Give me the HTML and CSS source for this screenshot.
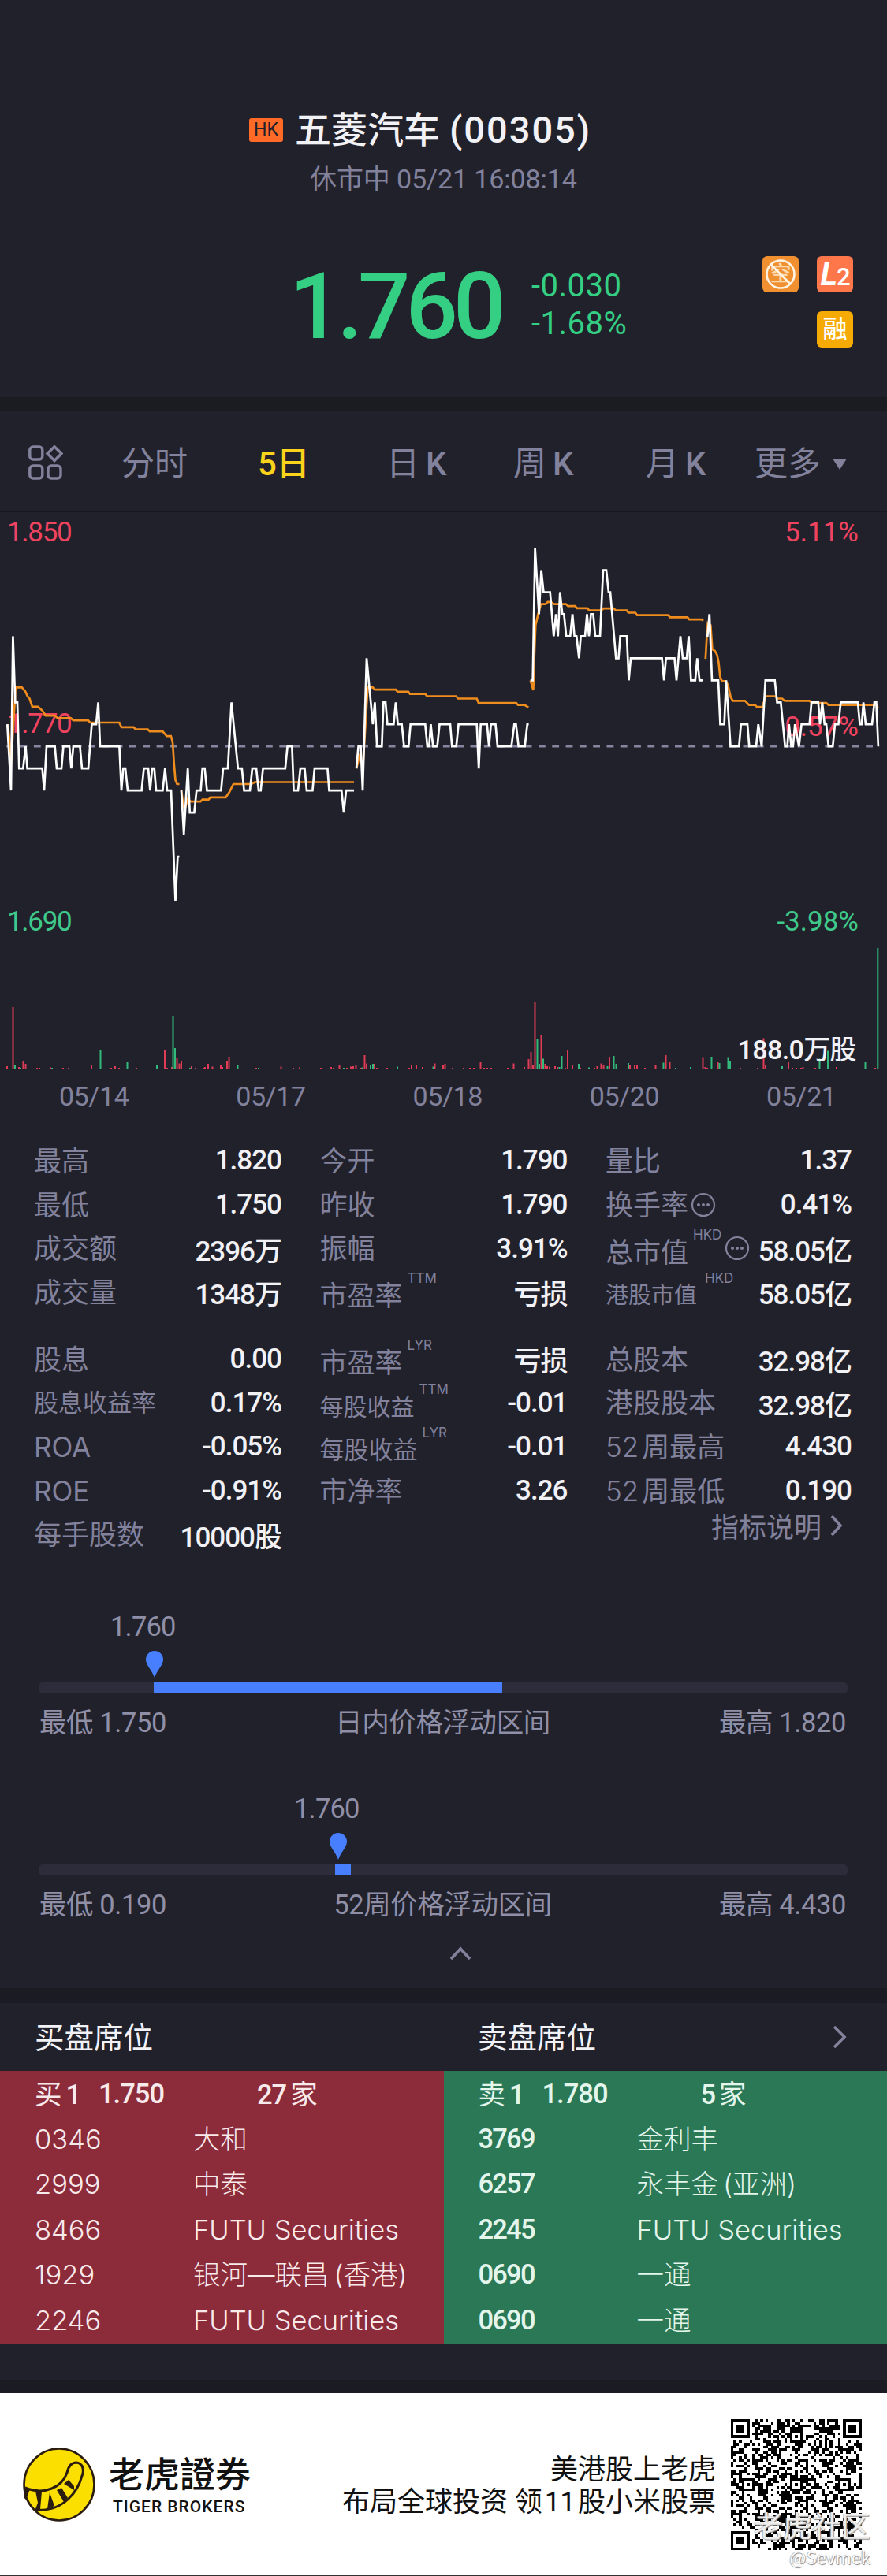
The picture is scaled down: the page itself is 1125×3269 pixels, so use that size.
FILE: index.html
```
<!DOCTYPE html>
<html lang="zh-CN">
<head>
    <meta charset="UTF-8">
    <meta name="viewport" content="width=device-width, initial-scale=1.0">
    <title>五菱汽车 (00305)</title>
    <link rel="stylesheet" href="styles.css">
</head>
<body>
    <header class="quote">
        <h1 class="quote-name"><span class="market">HK</span>五菱汽车<span class="code">(00305)</span></h1>
        <p class="quote-time">休市中 05/21 16:08:14</p>
        <div class="quote-row">
            <div class="price">1.760</div>
            <div class="change">
                <div>-0.030</div>
                <div>-1.68%</div>
            </div>
            <div class="badges">
                <span class="badge no-short">空
                    <svg viewBox="0 0 46 46"><circle cx="23" cy="23" r="17.5"/><path d="M11 11L35 35"/></svg>
                </span>
                <span class="badge level2"><i>L</i>2</span>
                <span class="badge margin-ok">融</span>
            </div>
        </div>
    </header>

    <nav class="tabs">
        <svg class="tabs-icon" viewBox="0 0 44 44">
            <rect x="1.8" y="2" width="16" height="16" rx="4"/>
            <path d="M33 1.8L42 10.5L33 19.5L24 10.5Z"/>
            <rect x="1.8" y="26" width="16" height="16" rx="4"/>
            <rect x="25" y="26" width="16" height="16" rx="4"/>
        </svg>
        <span>分时</span>
        <span class="active">5日</span>
        <span>日<b>K</b></span>
        <span>周<b>K</b></span>
        <span>月<b>K</b></span>
        <span class="more">更多<i class="caret"></i></span>
    </nav>

    <section class="chart">
        <svg class="chart-svg" viewBox="0 650 1125 708">
            <g class="axis">
                <text class="up" x="9" y="687">1.850</text>
                <text class="up" x="9" y="930">1.770</text>
                <text class="down" x="9" y="1181">1.690</text>
                <text class="up end" x="1089" y="687">5.11%</text>
                <text class="up end" x="1089" y="934">0.57%</text>
                <text class="down end" x="1089" y="1181">-3.98%</text>
            </g>
            <path class="base-line" d="M8.3 947.2H1114"/>
            <g id="average"></g>
            <g id="price"></g>
            <g id="volume"></g>
            <text class="volume-label end" x="1086" y="1344">188.0万股</text>
        </svg>
        <div class="dates">
            <span>05/14</span><span>05/17</span><span>05/18</span><span>05/20</span><span>05/21</span>
        </div>
    </section>

    <section class="stats">
        <div class="stats-grid">
            <dl>
                <div><dt>最高</dt><dd>1.820</dd></div>
                <div><dt>最低</dt><dd>1.750</dd></div>
                <div><dt>成交额</dt><dd>2396万</dd></div>
                <div><dt>成交量</dt><dd>1348万</dd></div>
            </dl>
            <dl>
                <div><dt>今开</dt><dd>1.790</dd></div>
                <div><dt>昨收</dt><dd>1.790</dd></div>
                <div><dt>振幅</dt><dd>3.91%</dd></div>
                <div><dt class="has-sup">市盈率<sup>TTM</sup></dt><dd>亏损</dd></div>
            </dl>
            <dl>
                <div><dt>量比</dt><dd>1.37</dd></div>
                <div>
                    <dt>换手率</dt>
                    <svg class="dots" viewBox="0 0 32 32"><circle class="ring" cx="16" cy="16" r="14"/><circle cx="10" cy="16" r="2"/><circle cx="16" cy="16" r="2"/><circle cx="22" cy="16" r="2"/></svg>
                    <dd>0.41%</dd>
                </div>
                <div>
                    <dt class="has-sup">总市值<sup>HKD</sup></dt>
                    <svg class="dots" viewBox="0 0 32 32"><circle class="ring" cx="16" cy="16" r="14"/><circle cx="10" cy="16" r="2"/><circle cx="16" cy="16" r="2"/><circle cx="22" cy="16" r="2"/></svg>
                    <dd>58.05亿</dd>
                </div>
                <div><dt class="has-sup small far">港股市值<sup>HKD</sup></dt><dd>58.05亿</dd></div>
            </dl>
        </div>
        <div class="stats-grid">
            <dl>
                <div><dt>股息</dt><dd>0.00</dd></div>
                <div><dt class="fit">股息收益率</dt><dd>0.17%</dd></div>
                <div><dt>ROA</dt><dd>-0.05%</dd></div>
                <div><dt>ROE</dt><dd>-0.91%</dd></div>
                <div><dt>每手股数</dt><dd>10000股</dd></div>
            </dl>
            <dl>
                <div><dt class="has-sup">市盈率<sup>LYR</sup></dt><dd>亏损</dd></div>
                <div><dt class="has-sup medium">每股收益<sup>TTM</sup></dt><dd>-0.01</dd></div>
                <div><dt class="has-sup fit">每股收益<sup>LYR</sup></dt><dd>-0.01</dd></div>
                <div><dt>市净率</dt><dd>3.26</dd></div>
            </dl>
            <dl>
                <div><dt>总股本</dt><dd>32.98亿</dd></div>
                <div><dt>港股股本</dt><dd>32.98亿</dd></div>
                <div><dt><span class="num">52</span>周最高</dt><dd>4.430</dd></div>
                <div><dt><span class="num">52</span>周最低</dt><dd>0.190</dd></div>
                <div class="explain">指标说明
                    <svg viewBox="0 0 20 30"><path d="M4 3L15 15L4 27"/></svg>
                </div>
            </dl>
        </div>
    </section>

    <section class="ranges">
        <div class="range">
            <div class="range-value day">1.760</div>
            <svg class="pin day" viewBox="0 0 22 34"><path d="M11 34C8 25 0 18 0 11A11 11 0 0 1 22 11C22 18 14 25 11 34Z"/></svg>
            <div class="track"><div class="fill" style="margin-left: 146px; width: 442px"></div></div>
            <div class="range-text"><span>最低 1.750</span><span>日内价格浮动区间</span><span>最高 1.820</span></div>
        </div>
        <div class="range">
            <div class="range-value year">1.760</div>
            <svg class="pin year" viewBox="0 0 22 34"><path d="M11 34C8 25 0 18 0 11A11 11 0 0 1 22 11C22 18 14 25 11 34Z"/></svg>
            <div class="track"><div class="fill" style="margin-left: 376px; width: 20px"></div></div>
            <div class="range-text"><span>最低 0.190</span><span>52周价格浮动区间</span><span>最高 4.430</span></div>
        </div>
        <svg class="collapse" viewBox="0 0 28 18"><path d="M2 16L14 3L26 16"/></svg>
    </section>

    <section class="seats">
        <div class="seats-head">
            <h2>买盘席位</h2>
            <h2>卖盘席位</h2>
            <svg viewBox="0 0 20 32"><path d="M3 3L16 16L3 29"/></svg>
        </div>
        <div class="seats-body">
            <div class="side buy">
                <div class="level"><span class="tag">买<b>1</b></span><b class="at">1.750</b><span class="count"><b>27</b>家</span></div>
                <div class="seat"><span>0346</span><span>大和</span></div>
                <div class="seat"><span>2999</span><span>中泰</span></div>
                <div class="seat"><span>8466</span><span>FUTU Securities</span></div>
                <div class="seat"><span>1929</span><span>银河—联昌<em>(香港)</em></span></div>
                <div class="seat"><span>2246</span><span>FUTU Securities</span></div>
            </div>
            <div class="side sell">
                <div class="level"><span class="tag">卖<b>1</b></span><b class="at">1.780</b><span class="count"><b>5</b>家</span></div>
                <div class="seat"><span>3769</span><span>金利丰</span></div>
                <div class="seat"><span>6257</span><span>永丰金<em>(亚洲)</em></span></div>
                <div class="seat"><span>2245</span><span>FUTU Securities</span></div>
                <div class="seat"><span>0690</span><span>一通</span></div>
                <div class="seat"><span>0690</span><span>一通</span></div>
            </div>
        </div>
    </section>

    <footer class="promo">
        <svg class="logo" viewBox="0 0 92 94">
            <ellipse class="coin" cx="46" cy="47" rx="44.5" ry="45.5"/>
            <path class="tail" d="M3 51C28 61 50 50 56 32C58 22 63 19 68 19C76 20 78 28 75 36C70 55 52 82 16 79"/>
            <path class="stripe" d="M2 50L9 53L4 66L9 72L2 64ZM16 55L24 56L22 78L16 78L19 70ZM34 57L40 74L31 78ZM43 54L49 51L57 64L52 69ZM52 46L58 41L65 49L65 54Z"/>
        </svg>
        <div class="brand">
            <strong>老虎證券</strong>
            <span>TIGER BROKERS</span>
        </div>
        <div class="slogan">
            <p>美港股上老虎</p>
            <p>布局全球投资 领<b>11</b>股小米股票</p>
        </div>
        <div class="qr-box">
            <svg class="qr" id="qr" viewBox="0 0 49 49" shape-rendering="crispEdges"></svg>
            <span class="community">老虎社区</span>
            <span class="author">@Sevmek</span>
        </div>
    </footer>
    <script src="script.js"></script>
</body>
</html>
```
FILE: styles.css
```
* {
    box-sizing: border-box;
}
body {
    margin: 0;
    width: 1125px;
    background: #21212b;
    color: #f2f2f6;
    font-family: Roboto, "Noto Sans CJK SC", sans-serif;
    font-size: 35px;
}
h1, h2, p, dl, dd {
    margin: 0;
    font-weight: 400;
}
svg {
    display: block;
    flex: none;
}

/* quote header */
.quote {
    height: 504px;
    padding-top: 136px;
}
.quote-name {
    display: flex;
    align-items: center;
    height: 58px;
    padding-left: 316px;
    font-size: 46px;
    font-weight: 500;
    line-height: 58px;
}
.market {
    width: 43px;
    height: 30px;
    margin-right: 15px;
    border-radius: 3px;
    background: #ff6b26;
    color: #21212b;
    font-size: 23px;
    font-weight: 400;
    line-height: 30px;
    text-align: center;
}
.code {
    margin-left: 12px;
    font-size: 47px;
    letter-spacing: 2px;
}
.quote-time {
    height: 40px;
    margin-top: 12px;
    padding-left: 393px;
    color: #82829d;
    font-size: 34px;
    letter-spacing: -0.1px;
    line-height: 42px;
}
.quote-row {
    display: flex;
    height: 116px;
    margin-top: 79px;
}
.price {
    width: 307px;
    margin-left: 367px;
    color: #34cf83;
    font-size: 117px;
    font-weight: 500;
    letter-spacing: -6px;
    line-height: 128px;
}
.change {
    width: 150px;
    margin-top: 14px;
    color: #34cf83;
    font-size: 40px;
    line-height: 48px;
    letter-spacing: 0.5px;
}
.badges {
    display: grid;
    grid-template-columns: 46px 46px;
    gap: 23px;
    margin: 0 43px 0 auto;
}
.badge {
    position: relative;
    width: 46px;
    height: 46px;
    border-radius: 6px;
    color: #fff;
    font-size: 31px;
    font-weight: 500;
    line-height: 46px;
    text-align: center;
}
.no-short {
    background: #f09030;
    color: #fcd9ac;
    font-size: 27px;
}
.no-short svg {
    position: absolute;
    inset: 0;
    fill: none;
    stroke: #fff4e4;
    stroke-width: 2.6;
}
.level2 {
    background: #fe774a;
    letter-spacing: -1px;
    line-height: 54px;
}
.level2 i {
    font-size: 41px;
    font-weight: 700;
    line-height: 40px;
}
.margin-ok {
    grid-column: 2;
    background: #f5aa04;
}

/* period tabs */
.tabs {
    display: grid;
    grid-template-columns: 118px 173px 163px 161px 168px 138px auto;
    align-items: center;
    height: 146px;
    padding: 2px 0 0 36px;
    border-top: 18px solid #1b1b22;
    border-bottom: 1px solid #17171e;
    color: #82829d;
    font-size: 42px;
    line-height: 60px;
}
.tabs span {
    padding-top: 4px;
}
.tabs b {
    margin-left: 8px;
    font-weight: 500;
}
.tabs .active {
    color: #fbd31b;
    font-weight: 500;
}
.tabs-icon {
    width: 44px;
    height: 44px;
    fill: none;
    stroke: #82829d;
    stroke-width: 3.4;
}
.more {
    display: flex;
    align-items: center;
}
.caret {
    margin-left: 15px;
    border: 9px solid transparent;
    border-top: 14px solid #82829d;
    border-bottom: 0;
}

/* five day chart */
.chart {
    height: 770px;
}
.chart-svg {
    width: 1125px;
    height: 708px;
}
.axis text {
    font-size: 35px;
    letter-spacing: -1.3px;
}
.axis .end {
    letter-spacing: 0;
}
.end {
    text-anchor: end;
}
.axis .up {
    fill: #ef4360;
}
.axis .down {
    fill: #3fc98a;
}
.base-line {
    stroke: #85859f;
    stroke-width: 2.6;
    stroke-dasharray: 8.8 8.5;
}
#price path {
    fill: none;
    stroke: #fff;
    stroke-width: 2.7;
}
#average path {
    fill: none;
    stroke: #ee8c1e;
    stroke-width: 2.7;
}
.volume-label {
    fill: #f2f2f6;
    font-size: 34px;
    font-weight: 500;
    letter-spacing: -0.6px;
}
.dates {
    display: grid;
    grid-template-columns: repeat(5, 224.3px);
    padding-left: 7px;
    color: #82829d;
    font-size: 34px;
    line-height: 66px;
    letter-spacing: -0.4px;
    text-align: center;
}

/* key figures */
.stats {
    height: 618px;
    padding: 25px 45px 0 43px;
}
.stats-grid {
    display: grid;
    grid-template-columns: 314px 314px 312px;
    column-gap: 48.5px;
    margin-bottom: 29px;
}
.stats dl > div {
    display: flex;
    align-items: center;
    height: 55.7px;
    white-space: nowrap;
}
.stats dt {
    color: #82829d;
    font-family: Inter, "Noto Sans CJK SC", sans-serif;
    line-height: 52px;
}
.stats dd {
    margin-left: auto;
    font-weight: 500;
    letter-spacing: -1px;
}
.has-sup {
    display: flex;
    padding-top: 9px;
}
.has-sup sup {
    margin: -13px 0 0 6px;
    font-size: 17px;
    line-height: 34px;
}
.stats .small {
    font-size: 29px;
}
.stats .medium {
    font-size: 30px;
}
.stats .fit {
    font-size: 31px;
}
.stats .far sup {
    margin-left: 10px;
}
.num {
    margin-right: 4px;
    font-weight: 300;
}
.dots {
    width: 32px;
    height: 32px;
    margin-left: 3px;
    fill: #82829d;
}
.has-sup + .dots {
    margin-left: 4px;
}
.dots .ring {
    fill: none;
    stroke: #82829d;
    stroke-width: 2.2;
}
.stats .explain {
    height: 32px;
    justify-content: flex-end;
    padding-right: 9px;
    color: #82829d;
}
.explain svg {
    width: 20px;
    height: 30px;
    margin-left: 9px;
}
.explain path, .collapse path, .seats-head path {
    fill: none;
    stroke: #82829d;
    stroke-width: 3.6;
}

/* price ranges */
.ranges {
    height: 485px;
    padding: 4px 50px 0 49px;
    color: #8f8fa8;
    font-size: 34.5px;
}
.range {
    height: 230.7px;
}
.range-value {
    height: 44px;
    line-height: 44px;
    letter-spacing: -0.8px;
}
.range-value.day {
    padding-left: 91px;
}
.range-value.year {
    padding-left: 324px;
}
.pin {
    width: 22px;
    height: 34px;
    margin-top: 9px;
    fill: #477fff;
}
.pin.day {
    margin-left: 136px;
}
.pin.year {
    margin-left: 369px;
}
.track {
    height: 14px;
    margin-top: 6px;
    border-radius: 5px;
    background: #2c2c3a;
}
.fill {
    height: 14px;
    background: #477fff;
}
.range-text {
    display: grid;
    grid-template-columns: 1fr auto 1fr;
    padding: 12px 2px 0 1px;
    line-height: 50px;
    letter-spacing: -0.4px;
}
.range-text span:last-child {
    text-align: right;
}
.collapse {
    width: 28px;
    height: 18px;
    margin: -33px 0 0 521px;
}

/* broker seats */
.seats {
    border-top: 19px solid #1b1b24;
    border-bottom: 17px solid #1b1b24;
    height: 514px;
}
.seats-head {
    display: flex;
    align-items: center;
    height: 86px;
    padding: 0 50px 0 44px;
}
.seats-head h2 {
    width: 562px;
    padding-bottom: 5px;
    font-size: 37.5px;
}
.seats-head h2 + h2 {
    width: auto;
}
.seats-head svg {
    width: 20px;
    height: 32px;
    margin-left: auto;
}
.seats-body {
    display: grid;
    grid-template-columns: 1fr 1fr;
}
.side {
    height: 346px;
    padding-left: 44px;
    background: #8c2b39;
    color: #f8e9eb;
    font-family: Inter, "Noto Sans CJK SC", sans-serif;
    font-size: 34.5px;
    line-height: 57.6px;
}
.side.sell {
    background: #2a7855;
    color: #e4f5ec;
}
.side b {
    font-family: Roboto, sans-serif;
    font-weight: 500;
    letter-spacing: -1px;
}
.level {
    display: flex;
    height: 57.6px;
    padding-top: 1px;
}
.tag {
    width: 81px;
}
.tag b {
    margin-left: 5px;
}
.at {
    width: 201px;
}
.count b {
    margin-right: 5px;
}
.seat {
    display: grid;
    grid-template-columns: 201px auto;
    font-weight: 300;
    white-space: nowrap;
}
.seat > span + span {
    font-family: Inter, "Noto Sans CJK SC", sans-serif;
}
.seat em {
    margin-left: 6px;
    font-style: normal;
}
.sell .seat > span:first-child {
    font-family: Roboto, sans-serif;
    font-weight: 500;
    letter-spacing: -1.8px;
}

/* promo strip */
.promo {
    display: flex;
    height: 232px;
    border-bottom: 1px solid #333;
    background: #fff;
    color: #111;
}
.logo {
    width: 92px;
    height: 94px;
    margin: 69px 0 0 29px;
}
.coin {
    fill: #fbdf00;
    stroke: #2a1c10;
    stroke-width: 2.6;
}
.tail {
    fill: none;
    stroke: #2a1c10;
    stroke-width: 3;
}
.stripe {
    fill: #2a1c10;
}
.brand {
    width: 180px;
    margin: 76px 0 0 17px;
}
.brand strong {
    display: block;
    font-family: Roboto, "Noto Sans CJK TC", sans-serif;
    font-size: 45px;
    font-weight: 500;
    line-height: 58px;
}
.brand span {
    display: block;
    padding-left: 5px;
    font-size: 21px;
    font-weight: 500;
    letter-spacing: 1px;
    line-height: 20px;
    white-space: nowrap;
}
.slogan {
    width: 590px;
    padding-top: 77px;
    font-size: 35px;
    line-height: 41px;
    text-align: right;
    white-space: nowrap;
}
.slogan b {
    margin: 0 3px;
    font-weight: 400;
}
.qr-box {
    position: relative;
    margin: 33px 0 0 19px;
}
.qr {
    width: 166px;
    height: 166px;
}
.community, .author {
    position: absolute;
    font-family: "Noto Sans CJK SC", sans-serif;
    white-space: nowrap;
    color: #fff;
    text-shadow: 1px 1px 1px #888, -1px 0 1px #aaa;
}
.community {
    right: -11px;
    top: 120px;
    color: rgba(255, 255, 255, .85);
    font-size: 37px;
    line-height: 28px;
}
.author {
    right: -11px;
    top: 164px;
    font-size: 22px;
    line-height: 20px;
}
```
FILE: script.js
```
// each point is "x:ticks", one tick = 0.01 away from 1.760
const TICK = 27.96;
const BASE = 947.2;

const price = [
    '9.3:1 14:-2 16.4:5 19.3:2 22:2 24.3:-1 29.3:-1 32.5:0 34.6:-1 53.6:-1 56:-2 59:0 69.6:0 72:-1 78:-1 80.4:0 88:0 90.4:-1 93:0 101.4:0 104:-1 112:-1 116.4:1 122:1 124.6:2 127:0 151.4:0 154:-2 156.4:-1 159:-1 162:-2 179.6:-2 182.5:-1 188:-1 190.4:-2 193:-1 195.7:-1 198:-2 206.4:-2 209.3:-1 212:-2 217:-2 222.5:-7 225.4:-5 227.5:-5',
    '230:-2 233.2:-4 238.2:-1 240.7:-3 246.4:-3 249.3:-2 254.6:-2 256.8:-1 259.6:-1 262.5:-2 280.4:-2 283:-1 289:-1 293.6:2 301.8:-1 306.8:-1 309.6:-2 317:-2 320:-1 325:-1 328:-2 330.7:-2 333.6:-1 361.8:-1 364.6:0 370.4:0 372.5:-2 378:-2 381:-1 386.4:-1 389:-2 396.4:-2 399:-1 415.4:-1 417.5:-2 433.2:-2 436:-3 439:-2 449:-2',
    '452:-1 454.6:0 457.5:0 460:-2 465:4 472.9:1 475.4:2 478.2:0 484.3:0 486.4:2 489:2 491.4:1 499.3:1 502:2 504.6:1 509.6:1 512.5:0 518.2:0 520.7:1 539.3:1 542:0 544.3:0 546.4:1 549.3:0 554.6:0 557.5:1 571:1 573.3:0 578.7:0 581.6:1 604.7:1 607.2:-1 609.7:1 617.7:1 620.2:0 622.7:1 628.5:1 631:0 648.6:0 652.3:1 654.4:1 657.7:0 665.6:0 668.8:1 670.6:1',
    '672.8:3 675.7:3 678.6:9 683.6:6 686.5:8 689.4:7 697.7:7 702.3:5 705.2:6 707.7:5 710.3:7 713.2:6 715.3:6 718.2:5 723.2:5 726.1:6 728.6:5 731.2:5 734.4:4 736.6:5 742:5 744.5:6 747:5 749.5:6 752.4:6 755:5 761:5 765:8 769:8 771.9:7 774:7 781.3:4 784.5:4 786.7:5 795:5 797.5:3 800:4 839.6:4 842.2:3 844.7:4 855.5:4 858:3 863:5 866:4 871:4 873.5:5 876.4:3 881.8:3 884.3:4 887.2:3 891.9:3',
    '895.5:5 897.3:5 899.8:6 903:3 911:3 913.5:1 918.6:1 921:3 926.5:0 937.3:0 939.8:1 948:1 950.3:0 959:0 961.8:1 966:0 970.8:3 982.7:3 985.6:2 990.3:2 995.7:0 998.6:0 1000.7:1 1003.6:0 1005.8:0 1008.3:1 1013.3:0 1016.6:1 1026.7:1 1029.2:2 1037.8:2 1040:1 1042.9:2 1045.8:1 1048:1 1050.8:0 1056.2:0 1059:1 1063.4:1 1066.3:2 1088:2 1090.5:1 1093:1 1095.1:2 1098:1 1106:1 1109:2 1111.4:2 1113.9:0'
];

const average = [
    '10:1 12.5:.1 14:-.8 19.8:2.68 27.8:2.68 32:2.5 35:2.27 37.5:2.17 41:1.8 48.2:1.8 53.5:1.63 58:1.4 69.6:1.4 73.2:1.28 90:1.28 93:1.18 111.8:1.18 114.3:1.08 151.4:1.08 154:.87 169.6:.87 172:.77 187.5:.77 190:.68 206.4:.68 211.4:.47 216.8:.47 219:.2 220.7:-.77 222.5:-1.53 224.6:-1.71 227.5:-1.71',
    '230:-2 233:-2.78 235:-2.78 238:-2.4 242:-2.5 254.3:-2.5 256.8:-2.41 264.6:-2.41 267:-2.31 286.4:-2.31 291:-2.07 296:-1.71 319:-1.71 323:-1.62 449:-1.62',
    '452:-1 456:-.45 460.4:-.83 463.2:.77 466.4:2.68 472.9:2.68 475.4:2.58 502:2.58 504.3:2.48 517.9:2.48 520:2.38 539.3:2.38 541.8:2.27 578.7:2.27 581:2.17 604.7:2.17 607:1.97 654.8:1.97 657:1.88 665.2:1.88 670.3:1.77',
    '672.8:3 676.4:2.55 677.8:4.2 679.3:5.5 682.5:6 686:6.46 692:6.46 694.8:6.56 698.7:6.56 702.3:6.46 717.8:6.46 720.4:6.37 729.4:6.37 732:6.27 744.9:6.27 747.4:6.17 762.5:6.17 765.4:6.26 778.4:6.26 781.3:6.17 795:6.17 797:6.07 805.8:6.07 808:5.96 847.6:5.96 849.7:5.86 872:5.86 874.2:5.76 890:5.76 892:5.7',
    '894.8:3.97 896.2:4.85 897.7:5.6 901.3:5.5 903.4:4.4 906.7:4.34 909.5:4.15 911.4:3.83 913.5:3.1 916:2.96 920.4:2.96 923.2:2.8 926.8:2.23 929.4:2.07 944.9:2.07 950:1.88 957.5:1.88 960:1.79 967.2:1.79 970.8:2.27 983.4:2.27 986.3:2.17 992:2.17 995.3:2.07 1026.7:2.07 1029.5:1.97 1048:1.97 1050.8:1.88 1111.4:1.88 1113.9:1.72'
];

function drawLines(id, days) {
    document.getElementById(id).innerHTML = days.map(day => {
        const points = day.split(' ').map(p => {
            const [x, ticks] = p.split(':').map(Number);
            return `${x} ${(BASE - ticks * TICK).toFixed(1)}`;
        });
        return `<path d="M${points.join('L')}"/>`;
    }).join('');
}

drawLines('average', average);
drawLines('price', price);

// volume bars as "x:height"
const up = '9:3 16.5:78 24:2 29.5:9 32.5:6 47:1 50:1 64:1.5 80:1 87:1 116:5 141:1 146:3 151:1 173:1 209:24 212:1 218:2 224.5:13 227.5:6.5 230:10 243:3 248:1 258:1 260:2 264:6 269.5:2.5 280:4 282:2 288:9 290.5:15 325:1 356.5:2.5 372:1 380:1.5 407:1 420:2 423:1 430.5:5 440:1 445:2.5 448:3 451.5:5 458:1 462.5:17 465:6.5 475:6 478:1 491:1 519:1 522:4 528:5 536:2 551.5:6.5 562:4 564.5:6 574:1 588:1 596:1 601:1 609.5:8 614:1 618:1 623:1 644:1 651.5:6.5 665:2 670.5:12 673.5:21 676:4 678.5:85 686.5:43 691.5:6 694:3 697:2.5 704:3 707:2 717:1 720:23.5 726:4 736:1 754:1 757.5:3 762.5:6.5 765.5:4 773:15 799:4 805:5 808:4 818:1 831.5:4 844.5:17 849.5:8 891.5:14.5 894.5:2 897:1 910.5:8 939:1 961:1 968.5:38.5 971:4 1000:8 1005:1 1010:1 1016:1 1018.5:2 1034:1 1061:2 1110:1';
const down = '19:4 26:1 66:1 127.5:24 161.5:8 199:4 219.5:67 222:26 241:1 301.5:4.5 328:1 436:1 459.5:1.5 470:4.5 473:6 504:2.5 549.5:2.5 681.5:37 684:6 689:12.5 709.5:2 712.5:16 734:6 747:1.5 770.5:3 778.5:16 781.5:6 797:7 841.5:7.5 857:1 876:2 902.5:15 912.5:7 923.5:14.5 926:10 992:3 1039.5:12.5 1050:22.5 1097.5:8 1113.3:153';

function bars(list, color) {
    return list.split(' ').map(b => {
        const [x, h] = b.split(':').map(Number);
        return `<rect x="${x - 1}" y="${1356 - h}" width="2" height="${h}" fill="${color}"/>`;
    }).join('');
}

document.getElementById('volume').innerHTML = bars(up, '#e03c56') + bars(down, '#32b97b');

// QR code: finder and alignment squares, the rest is filled in
const SIZE = 49;
let seed = 20210521;
function next() {
    seed = (seed * 1103515245 + 12345) % 2147483648;
    return seed / 2147483648;
}

function square(cx, cy, r, x, y) {
    const d = Math.max(Math.abs(x - cx), Math.abs(y - cy));
    if (d > r) return null;
    return r === 4 ? d !== 4 && d !== 2 : d !== 1;
}

function moduleAt(x, y) {
    for (const [cx, cy] of [[3, 3], [45, 3], [3, 45]]) {
        const hit = square(cx, cy, 4, x, y);
        if (hit !== null) return hit;
    }
    for (const [cx, cy] of [[24, 6], [6, 24], [24, 24], [42, 24], [24, 42], [42, 42]]) {
        const hit = square(cx, cy, 2, x, y);
        if (hit !== null) return hit;
    }
    return next() < 0.52;
}

let qr = '';
for (let y = 0; y < SIZE; y++) {
    for (let x = 0; x < SIZE; x++) {
        if (moduleAt(x, y)) qr += `M${x} ${y}h1v1h-1z`;
    }
}
document.getElementById('qr').innerHTML = `<path d="${qr}"/>`;
```
